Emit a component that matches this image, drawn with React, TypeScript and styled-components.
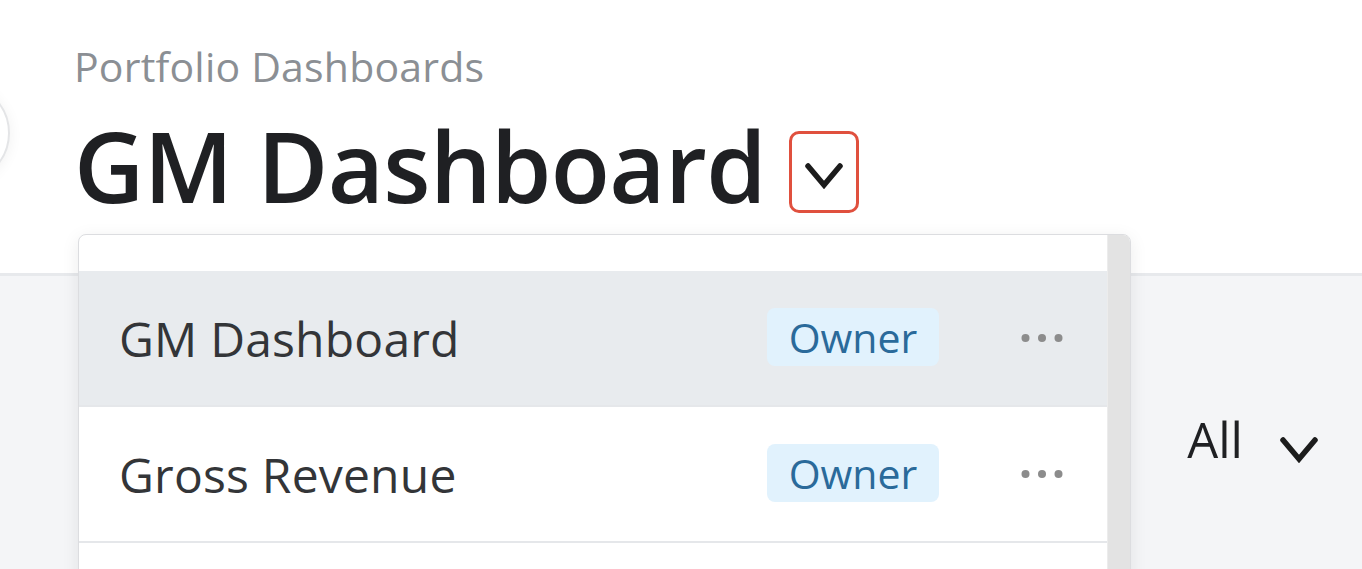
import styled, { createGlobalStyle } from "styled-components";

const GlobalStyle = createGlobalStyle`
  html, body {
    margin: 0;
    padding: 0;
    overflow: hidden;
  }
  body {
    font-family: "Open Sans", "Noto Sans", sans-serif;
    background: #ffffff;
  }
`;

const dashboards = [
  { name: "GM Dashboard", role: "Owner", active: true },
  { name: "Gross Revenue", role: "Owner", active: false },
];

function Chevron({ width, height, stroke }: { width: number; height: number; stroke: number }) {
  return (
    <svg width={width} height={height} viewBox={`0 0 ${width} ${height}`} fill="none">
      <polyline
        points={`4,4 ${width / 2},${height - 4} ${width - 4},4`}
        stroke="#1c1c1c"
        strokeWidth={stroke}
        strokeLinecap="round"
        strokeLinejoin="miter"
      />
    </svg>
  );
}

function MoreDots() {
  return (
    <svg width="42" height="10" viewBox="0 0 42 10">
      <circle cx="4.5" cy="5" r="4" fill="#8c8c8c" />
      <circle cx="21" cy="5" r="4" fill="#8c8c8c" />
      <circle cx="37.5" cy="5" r="4" fill="#8c8c8c" />
    </svg>
  );
}

function App() {
  return (
    <Page>
      <GlobalStyle />
      <SidebarToggle />
      <Header>
        <Breadcrumb>Portfolio Dashboards</Breadcrumb>
        <TitleRow>
          <Title>GM Dashboard</Title>
          <ToggleButton>
            <Chevron width={40} height={27} stroke={5.5} />
          </ToggleButton>
        </TitleRow>
      </Header>
      <Content>
        <FilterSelect>
          <FilterLabel>All</FilterLabel>
          <FilterIcon>
            <Chevron width={40} height={27} stroke={5.5} />
          </FilterIcon>
        </FilterSelect>
      </Content>
      <Menu>
        <MenuList>
          {dashboards.map((d) => (
            <MenuRow key={d.name} $active={d.active}>
              <RowName>{d.name}</RowName>
              <RowActions>
                <RoleBadge>{d.role}</RoleBadge>
                <MoreDots />
              </RowActions>
            </MenuRow>
          ))}
        </MenuList>
        <Scrollbar />
      </Menu>
    </Page>
  );
}

export default App;

const Page = styled.div`
  position: relative;
  height: 100vh;
  display: flex;
  flex-direction: column;
  overflow: hidden;
`;

const SidebarToggle = styled.div`
  position: absolute;
  left: -90px;
  top: 83px;
  width: 100px;
  height: 100px;
  border-radius: 50%;
  background: #ffffff;
  border: 2px solid #e4e5e7;
  box-shadow: 0 2px 14px rgba(0, 0, 0, 0.06);
  box-sizing: border-box;
`;

const Header = styled.div`
  height: 276px;
  box-sizing: border-box;
  padding: 46px 0 0 74px;
  background: #ffffff;
  border-bottom: 3px solid #e7e9ec;
`;

const Breadcrumb = styled.div`
  font-size: 41px;
  line-height: 40px;
  color: #8b8f94;
  letter-spacing: 0.2px;
`;

const TitleRow = styled.div`
  display: flex;
  align-items: flex-end;
  gap: 23px;
  margin-top: 30px;
`;

const Title = styled.h1`
  margin: 0;
  font-size: 97px;
  line-height: 98px;
  font-weight: 600;
  letter-spacing: -0.6px;
  color: #1f2023;
`;

const ToggleButton = styled.div`
  width: 70px;
  height: 82px;
  box-sizing: border-box;
  border: 3px solid #e0503e;
  border-radius: 10px;
  padding-top: 6px;
  display: flex;
  align-items: center;
  justify-content: center;
  margin-bottom: 1px;
`;

const Content = styled.div`
  flex: 1;
  background: #f4f5f7;
  display: flex;
  justify-content: flex-end;
  align-items: flex-start;
  padding: 139px 43px 0 0;
`;

const FilterSelect = styled.div`
  display: flex;
  align-items: flex-end;
  gap: 36px;
`;

const FilterLabel = styled.span`
  font-size: 49px;
  line-height: 49px;
  color: #1f2023;
`;

const FilterIcon = styled.span`
  display: flex;
  margin-bottom: 1px;
`;

const Menu = styled.div`
  position: absolute;
  left: 78px;
  top: 234px;
  width: 1053px;
  height: 420px;
  box-sizing: border-box;
  display: flex;
  background: #ffffff;
  border: 1px solid #dcdde0;
  border-radius: 8px;
  box-shadow: 0 4px 18px rgba(0, 0, 0, 0.08);
  overflow: hidden;
`;

const MenuList = styled.div`
  flex: 1;
  padding-top: 36px;
`;

const MenuRow = styled.div<{ $active: boolean }>`
  height: 136px;
  box-sizing: border-box;
  display: flex;
  align-items: center;
  justify-content: space-between;
  padding: 0 44px 0 40px;
  background: ${(p) => (p.$active ? "#e8ebee" : "#ffffff")};
  border-bottom: 2px solid #e5e7ea;
`;

const RowName = styled.span`
  font-size: 48px;
  letter-spacing: 0.2px;
  color: #333538;
`;

const RowActions = styled.div`
  display: flex;
  align-items: center;
  gap: 82px;
`;

const RoleBadge = styled.span`
  width: 172px;
  height: 58px;
  box-sizing: border-box;
  display: flex;
  align-items: center;
  justify-content: center;
  border-radius: 8px;
  background: #e1f2fd;
  color: #2a6a9a;
  font-size: 41px;
  margin-bottom: 2px;
`;

const Scrollbar = styled.div`
  width: 22px;
  background: #e3e3e3;
  border-left: 1px solid #ececec;
`;
